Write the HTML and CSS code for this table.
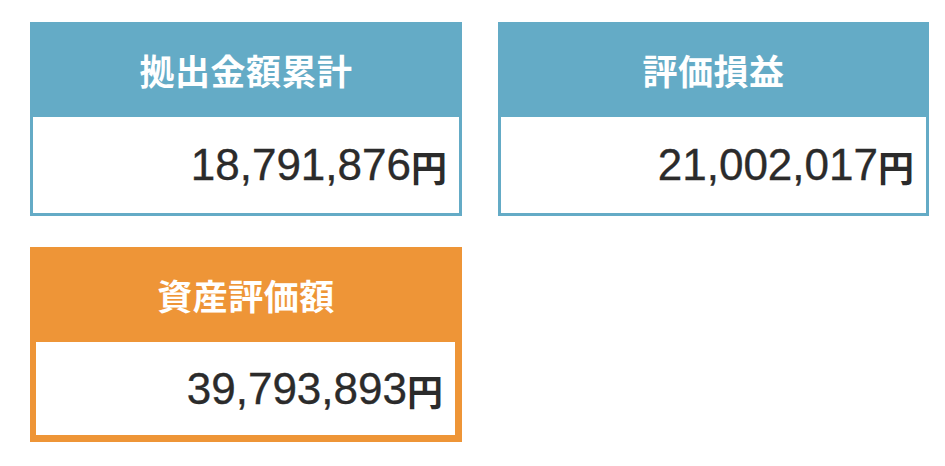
FILE: index.html
```html
<!DOCTYPE html>
<html lang="ja">
<head>
<meta charset="utf-8">
<link rel="stylesheet" href="styles.css">
</head>
<body>
<div class="grid">
  <div class="card blue">
    <div class="card-head">拠出金額累計</div>
    <div class="card-body">18,791,876<span class="unit">円</span></div>
  </div>
  <div class="card blue">
    <div class="card-head">評価損益</div>
    <div class="card-body">21,002,017<span class="unit">円</span></div>
  </div>
  <div class="card orange">
    <div class="card-head">資産評価額</div>
    <div class="card-body">39,793,893<span class="unit">円</span></div>
  </div>
</div>
</body>
</html>
```
FILE: styles.css
```css
html, body {
  margin: 0;
  background: #ffffff;
}
body {
  padding: 22px 0 0 30px;
  font-family: "Noto Sans CJK JP", "Noto Sans", sans-serif;
}
.grid {
  display: grid;
  grid-template-columns: 432px 431px;
  column-gap: 36px;
  row-gap: 31px;
}
.card {
  display: flex;
  flex-direction: column;
  box-sizing: border-box;
}
.card-head {
  height: 95px;
  display: flex;
  align-items: center;
  justify-content: center;
  color: #ffffff;
  font-size: 35px;
  font-weight: 700;
  letter-spacing: 0.5px;
}
.card-body {
  box-sizing: border-box;
  height: 99px;
  display: flex;
  align-items: center;
  justify-content: flex-end;
  background: #ffffff;
  color: #2b2b2b;
  font-family: "Liberation Sans", "Noto Sans CJK JP", sans-serif;
  font-size: 44px;
  font-weight: 400;
  -webkit-text-stroke: 0.35px #2b2b2b;
  padding-right: 12px;
  border-style: solid;
  border-top: 0;
}
.unit {
  font-family: "Noto Sans CJK JP", sans-serif;
  font-size: 36px;
  font-weight: 700;
  -webkit-text-stroke: 0;
  position: relative;
  top: 1px;
}
.blue .card-head { background: #64abc6; }
.blue .card-body {
  border-color: #64abc6;
  border-width: 0 3px 3px 3px;
}
.orange .card-head { background: #ee9537; }
.orange .card-body {
  height: 100px;
  border-color: #ee9537;
  border-width: 0 7px 7px 6px;
}
```
